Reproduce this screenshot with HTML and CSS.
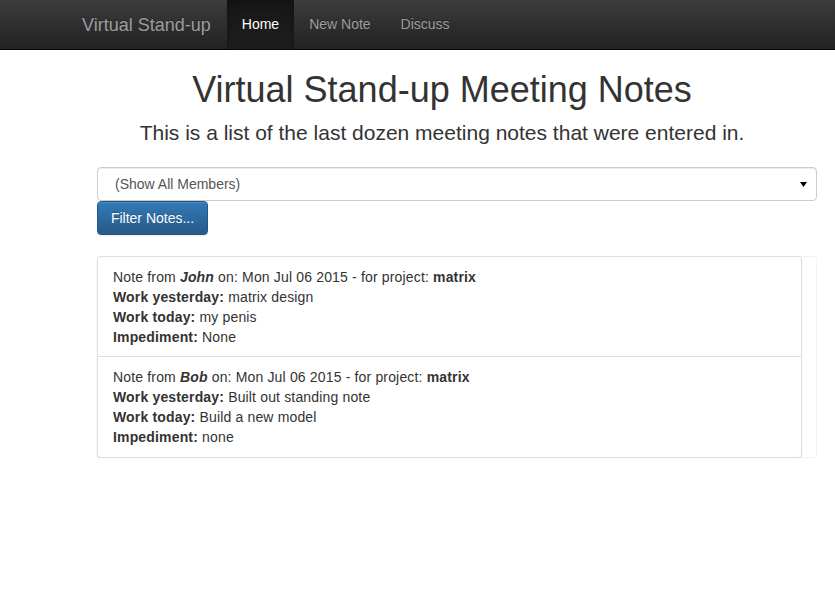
FILE: index.html
```html
<!DOCTYPE html>
<html lang="en">
<head>
<meta charset="utf-8">
<title>Virtual Stand-up</title>
<link rel="stylesheet" href="styles.css">
</head>
<body>
<nav class="navbar">
  <a class="brand" href="#">Virtual Stand-up</a>
  <ul class="nav">
    <li class="active"><a href="#">Home</a></li>
    <li><a href="#">New Note</a></li>
    <li><a href="#">Discuss</a></li>
  </ul>
</nav>
<main class="page">
  <div class="intro">
    <h1>Virtual Stand-up Meeting Notes</h1>
    <p class="lead">This is a list of the last dozen meeting notes that were entered in.</p>
  </div>
  <form class="filter">
    <div class="select">
      <span>(Show All Members)</span>
      <svg width="7" height="5" viewBox="0 0 7 5"><path d="M0 0H7L3.5 5Z" fill="#000"/></svg>
    </div>
    <button type="button" class="btn">Filter Notes...</button>
  </form>
  <div class="panel">
    <ul class="list-group">
      <li class="item">
        <div>Note from <b><i>John</i></b> on: Mon Jul 06 2015 - for project: <b>matrix</b></div>
        <div><b>Work yesterday:</b> matrix design</div>
        <div><b>Work today:</b> my penis</div>
        <div><b>Impediment:</b> None</div>
      </li>
      <li class="item">
        <div>Note from <b><i>Bob</i></b> on: Mon Jul 06 2015 - for project: <b>matrix</b></div>
        <div><b>Work yesterday:</b> Built out standing note</div>
        <div><b>Work today:</b> Build a new model</div>
        <div><b>Impediment:</b> none</div>
      </li>
    </ul>
  </div>
</main>
</body>
</html>
```
FILE: styles.css
```css
* { box-sizing: border-box; }
html, body { margin: 0; padding: 0; }
body {
  font-family: "Liberation Sans", Arial, Helvetica, sans-serif;
  font-size: 14px;
  line-height: 20px;
  color: #333;
  background: #fff;
}
.navbar {
  height: 50px;
  display: flex;
  align-items: stretch;
  padding-left: 67px;
  background: linear-gradient(to bottom, #3c3c3c 0, #222 100%);
  border-bottom: 1px solid #080808;
}
.brand {
  padding: 15px 15px;
  font-size: 18px;
  line-height: 20px;
  color: #9d9d9d;
  text-decoration: none;
  text-shadow: 0 -1px 0 rgba(0,0,0,.25);
}
.nav {
  list-style: none;
  margin: 0 0 0 1px;
  padding: 0;
  display: flex;
}
.nav li a {
  display: block;
  padding: 15px 15px;
  line-height: 19px;
  color: #9d9d9d;
  text-decoration: none;
  text-shadow: 0 -1px 0 rgba(0,0,0,.25);
}
.nav li.active a {
  color: #fff;
  box-shadow: inset 0 3px 9px rgba(0,0,0,.25);
  background-color: #1a1a1a;
  background-image: linear-gradient(to bottom, #171717 0, #1e1e1e 100%);
}
.page {
  margin-left: 97px;
  width: 720px;
}
.intro {
  width: 690px;
  text-align: center;
}
h1 {
  margin: 20px 0 10px;
  font-size: 36px;
  font-weight: 400;
  line-height: 40px;
}
.lead {
  margin: 0 0 21px;
  font-size: 21px;
  line-height: 26px;
}
.filter { margin: 0; }
.select {
  height: 34px;
  display: flex;
  align-items: center;
  justify-content: space-between;
  padding: 0 9px 0 17px;
  border: 1px solid #ccc;
  border-radius: 4px;
  color: #555;
  box-shadow: inset 0 1px 1px rgba(0,0,0,.075);
}
.select svg { margin-top: 1px; }
.btn {
  display: block;
  height: 34px;
  padding: 6px 12px;
  font-family: inherit;
  font-size: 14px;
  line-height: 20px;
  color: #fff;
  border: 1px solid #245580;
  border-radius: 4px;
  background: linear-gradient(to bottom, #337ab7 0, #265a88 100%);
  text-shadow: 0 -1px 0 rgba(0,0,0,.2);
  box-shadow: inset 0 1px 0 rgba(255,255,255,.15), 0 1px 1px rgba(0,0,0,.075);
  width: 111px;
}
.panel {
  margin-top: 21px;
  border: 1px solid #f3f3f3;
  border-left: none;
  border-radius: 4px;
  padding-right: 14px;
}
.list-group {
  list-style: none;
  margin: -1px 0 -1px 0;
  padding: 0;
  border-radius: 4px;
  box-shadow: 0 1px 2px rgba(0,0,0,.075);
}
.item {
  padding: 10px 15px;
  border: 1px solid #ddd;
  height: 101px;
  letter-spacing: 0.16px;
}
.item:first-child { border-radius: 4px 4px 0 0; }
.item + .item { border-top: none; height: 101px; border-radius: 0 0 4px 4px; }
```
